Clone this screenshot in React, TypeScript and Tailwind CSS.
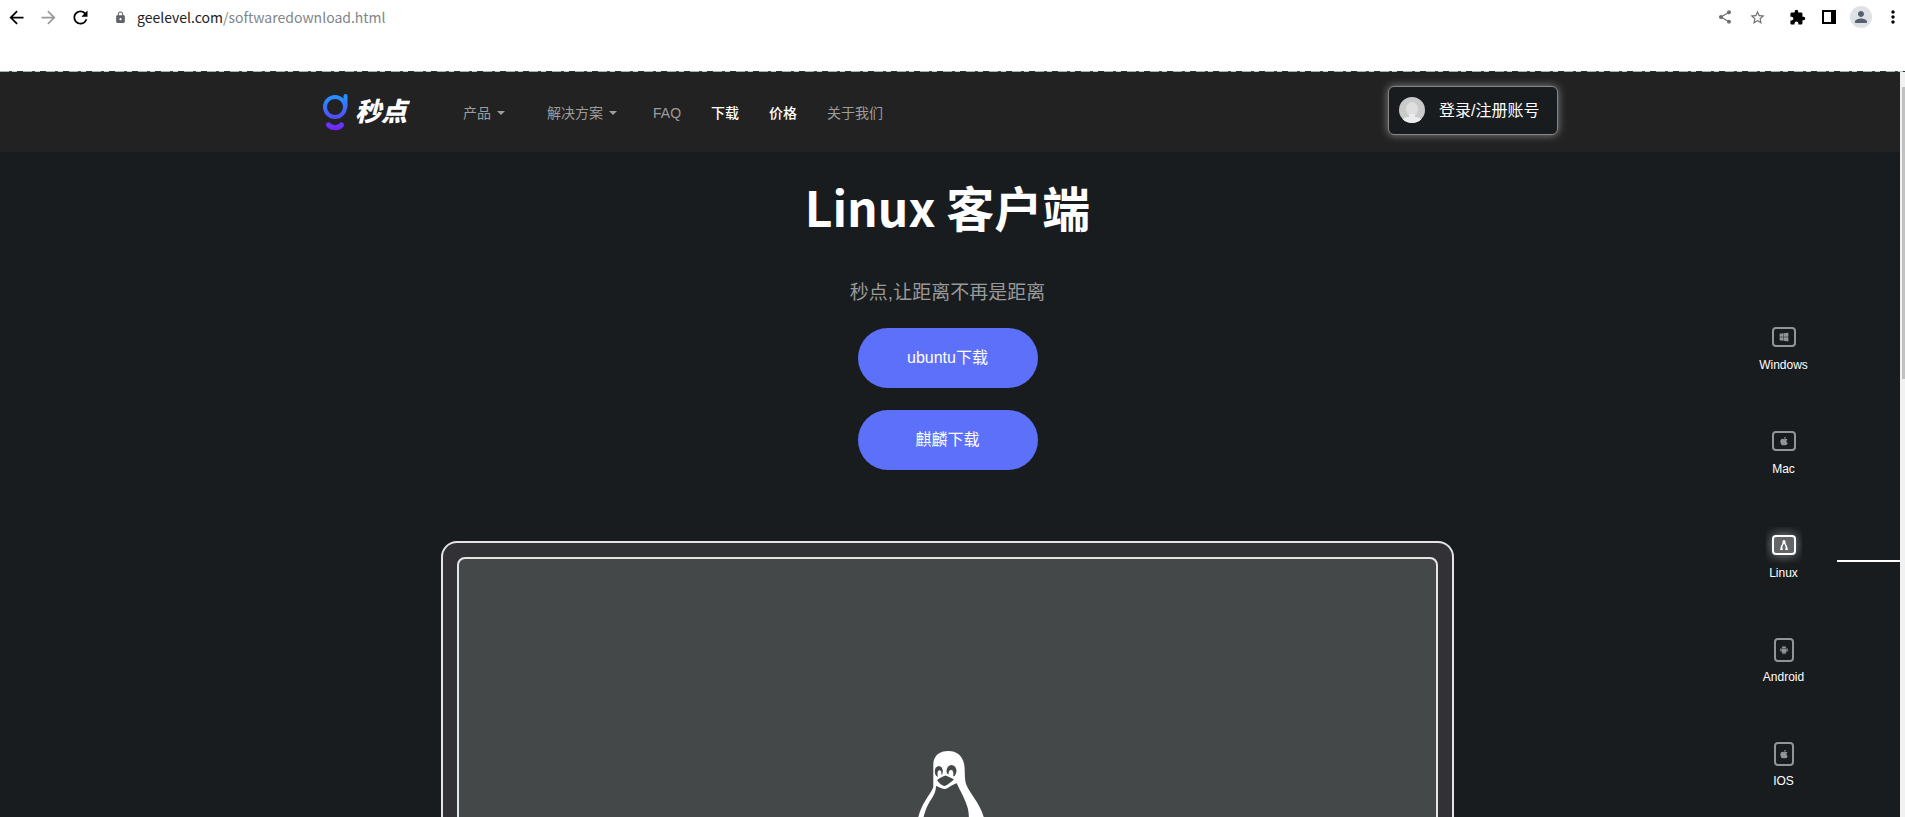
import type { ReactNode } from "react";
import type { IconType } from "react-icons";
import { AiFillAndroid } from "react-icons/ai";
import {
  MdArrowBack,
  MdArrowForward,
  MdExtension,
  MdLock,
  MdMoreVert,
  MdPerson,
  MdRefresh,
  MdShare,
  MdStarBorder,
} from "react-icons/md";
import { FaApple, FaWindows } from "react-icons/fa";

interface NavItem {
  label: string;
  className: string;
  dropdown?: boolean;
}

interface Platform {
  name: string;
  icon: IconType;
  phone?: boolean;
  active?: boolean;
}

const LinuxMark: IconType = () => (
  <svg width="10" height="12" viewBox="0 0 10 12" fill="currentColor">
    <path d="M5 1C3.700 1 3.500 2 3.500 3.500C3.500 5 1.800 6.500 1.500 9L1 11H4L3.500 9.500C3 8 4 6 5 4.500C6 6 7 8 6.500 9.500L6 11H9L8.500 9C8.200 6.500 6.500 5 6.500 3.500C6.500 2 6.300 1 5 1Z" />
  </svg>
);

const navItems: NavItem[] = [
  { label: "产品", className: "w-[84px] text-[#9d9d9d]", dropdown: true },
  { label: "解决方案", className: "w-[106px] text-[#9d9d9d]", dropdown: true },
  { label: "FAQ", className: "text-[#9d9d9d]" },
  { label: "下载", className: "text-white font-medium" },
  { label: "价格", className: "text-white font-medium" },
  { label: "关于我们", className: "text-[#9d9d9d]" },
];

const platforms: Platform[] = [
  { name: "Windows", icon: FaWindows },
  { name: "Mac", icon: FaApple },
  { name: "Linux", icon: LinuxMark, active: true },
  { name: "Android", icon: AiFillAndroid, phone: true },
  { name: "IOS", icon: FaApple, phone: true },
];

const ToolButton = ({ label, children }: { label: string; children: ReactNode }) => (
  <button aria-label={label} className="flex h-8 w-8 shrink-0 items-center justify-center">
    {children}
  </button>
);

const BrowserBar = () => (
  <div className="h-[71px] shrink-0 bg-white">
    <div className="flex h-[34px] items-center text-black">
      <ToolButton label="Back">
        <MdArrowBack size={21} />
      </ToolButton>
      <ToolButton label="Forward">
        <MdArrowForward size={21} className="text-[#9a9a9a]" />
      </ToolButton>
      <ToolButton label="Reload">
        <MdRefresh size={21} />
      </ToolButton>
      <div className="ml-2 flex flex-1 items-center">
        <span className="flex w-8 justify-center">
          <MdLock size={13} className="text-[#5f6368]" />
        </span>
        <span className="pl-px font-['Noto_Sans_CJK_SC',sans-serif] text-sm leading-5 text-[#202124]">
          geelevel.com<span className="text-[#80868b]">/softwaredownload.html</span>
        </span>
      </div>
      <ToolButton label="Share">
        <MdShare size={16} className="text-[#6e6e6e]" />
      </ToolButton>
      <ToolButton label="Bookmark">
        <MdStarBorder size={17} className="text-[#6e6e6e]" />
      </ToolButton>
      <div className="-mr-1 ml-2 flex">
        <ToolButton label="Extensions">
          <MdExtension size={17} />
        </ToolButton>
        <ToolButton label="Side panel">
          <span className="h-[14px] w-[14px] border-2 border-r-[5px] border-black" />
        </ToolButton>
        <ToolButton label="Profile">
          <span className="flex h-[22px] w-[22px] items-center justify-center rounded-full bg-[#dee1e6]">
            <MdPerson size={18} className="text-[#566070]" />
          </span>
        </ToolButton>
        <ToolButton label="Menu">
          <MdMoreVert size={20} />
        </ToolButton>
      </div>
    </div>
  </div>
);

const Logo = () => (
  <a href="#" className="flex items-center gap-1.5">
    <svg width="26" height="38" viewBox="0 0 26 38" fill="none" strokeLinecap="round">
      <defs>
        <linearGradient id="logo" x1="0" y1="0" x2="0" y2="38" gradientUnits="userSpaceOnUse">
          <stop offset="0" stopColor="#1f9bff" />
          <stop offset="0.55" stopColor="#4a5bff" />
          <stop offset="1" stopColor="#7a1fff" />
        </linearGradient>
      </defs>
      <g stroke="url(#logo)">
        <circle cx="12" cy="14" r="10" strokeWidth="4" />
        <path d="M22.500 3V14" strokeWidth="4" />
        <path d="M5.500 32C9.500 35.500 15.500 35.500 18.500 32" strokeWidth="5" />
      </g>
    </svg>
    <span className="text-[26px] leading-8 font-black text-white italic">秒点</span>
  </a>
);

const Navbar = () => (
  <nav className="h-20 bg-[#222222]">
    <div className="mr-[18%] ml-[17%] flex h-full items-center">
      <Logo />
      <ul className="ml-[41px] flex flex-1 pt-0.5 text-sm">
        {navItems.map((item) => (
          <li key={item.label}>
            <a href="#" className={`flex items-center gap-1.5 px-[15px] leading-5 whitespace-nowrap ${item.className}`}>
              {item.label}
              {item.dropdown && (
                <span className="border-x-4 border-t-4 border-x-transparent border-t-current" />
              )}
            </a>
          </li>
        ))}
      </ul>
      <button className="mb-1 flex h-[49px] w-[170px] shrink-0 items-center gap-3.5 rounded-md border border-[#858585] bg-[#181c1f] pl-2.5 text-base whitespace-nowrap text-white shadow-[0_0_8px_#888888]">
        <svg width="26" height="26" viewBox="0 0 26 26">
          <defs>
            <clipPath id="face">
              <circle cx="13" cy="13" r="13" />
            </clipPath>
          </defs>
          <g clipPath="url(#face)">
            <rect width="26" height="26" fill="#c9cbcb" />
            <ellipse cx="13" cy="12" rx="6" ry="7" fill="#dfdfdf" />
            <path d="M10 17h6v3c4 0 7 2 8 6H2c1-4 4-6 8-6z" fill="#ececec" />
          </g>
        </svg>
        <span className="pt-0.5">登录/注册账号</span>
      </button>
    </div>
  </nav>
);

const Penguin = () => (
  <svg width="80" height="110" viewBox="0 0 80 110" className="shrink-0">
    <path
      fill="#ffffff"
      d="M38.300 3C29 3 23.300 8 23.300 17V39C21 46 12 54 8.300 69L2 95L20 108H62L78 95L74 70C70 55 60 46 56 36C54.500 31 55 26 54.600 20C54 9 48 3 38.300 3Z"
    />
    <path
      fill="#444849"
      d="M26 38C28 38 31 41 34.500 41C38 41 43 36 46.700 35.300C50 43 55 50 58 61C61 76 56 92 50 100H24L12 82C12 72 15 62 19 55C22 50 26 45 26 38Z"
    />
    <ellipse cx="28.800" cy="23.500" rx="4" ry="5.600" fill="#444849" />
    <ellipse cx="41.500" cy="23" rx="5" ry="6" fill="#444849" />
    <ellipse cx="29.500" cy="26" rx="2" ry="3.800" fill="#ffffff" />
    <ellipse cx="41" cy="26" rx="2.400" ry="4" fill="#ffffff" />
    <path d="M25 30L35.500 25L47 30L35 41Z" fill="#ffffff" />
    <path d="M27 32C30 30 33 28 35.500 27.500C38 28 41 30 44 31.500C41 34 37 37.500 34 38C31 37 29 35 27 32Z" fill="#444849" />
  </svg>
);

const Hero = () => (
  <section className="col-start-1 row-start-1 flex flex-col items-center pt-5 pr-[5px]">
    <h1 className="font-['Noto_Sans_CJK_SC',sans-serif] text-5xl leading-[68px] font-bold text-white">
      Linux 客户端
    </h1>
    <p className="mt-[37px] text-[19px] leading-8 text-[#999999]">秒点,让距离不再是距离</p>
    <div className="mt-[19px] flex flex-col gap-[22px] text-base text-white">
      <button className="h-[60px] w-[180px] rounded-full bg-[#5d70fa]">ubuntu下载</button>
      <button className="h-[60px] w-[180px] rounded-full bg-[#5d70fa]">麒麟下载</button>
    </div>
    <div className="mt-[71px] w-[53.5%] rounded-t-2xl border-2 border-b-0 border-[#e4e4e4] bg-[#323236] px-3.5 pt-3.5">
      <div className="flex h-[480px] justify-center rounded-t-lg border-2 border-[#e4e4e4] bg-[#444849] pt-[189px] pl-1">
        <Penguin />
      </div>
    </div>
  </section>
);

const PlatformRail = () => (
  <aside className="col-start-1 row-start-1 flex justify-self-end pt-[167px]">
    <ul className="flex w-[107px] flex-col">
      {platforms.map(({ name, icon: Icon, phone, active }) => (
        <li key={name} className="h-[104px]">
          <a href="#" className="flex flex-col items-center text-xs leading-4 text-white">
            <span
              className={`flex h-9 w-9 items-center justify-center overflow-hidden ${active ? "text-white" : "text-[#939495]"} ${phone ? "pt-0.5" : ""}`}
            >
              <span
                className={`flex items-center justify-center rounded border-2 border-current ${phone ? "h-6 w-5" : "h-5 w-6"} ${active ? "bg-[#646566] shadow-[0_0_12px_#909090]" : ""}`}
              >
                <Icon size={10} />
              </span>
            </span>
            <span className="mt-0.5">{name}</span>
          </a>
        </li>
      ))}
    </ul>
    <span className="mt-[241px] h-0.5 w-[63px] bg-white" />
  </aside>
);

export default function App() {
  return (
    <div className="flex h-screen flex-col overflow-hidden bg-[#181c1f] font-['Liberation_Sans','Noto_Sans_CJK_SC',sans-serif]">
      <BrowserBar />
      <div className="h-px shrink-0 bg-[repeating-linear-gradient(90deg,#a9b3b0_0_9px,#3c4644_9px_12px,#c4cccb_12px_17px,#26302e_17px_23px)]" />
      <div className="flex min-h-0 flex-1">
        <div className="min-w-0 flex-1">
          <Navbar />
          <main className="grid">
            <Hero />
            <PlatformRail />
          </main>
        </div>
        <div className="w-[5px] shrink-0 bg-[#f1f1f1] pt-[15px] pl-0.5">
          <div className="h-[292px] bg-[#c1c1c1]" />
        </div>
      </div>
    </div>
  );
}
